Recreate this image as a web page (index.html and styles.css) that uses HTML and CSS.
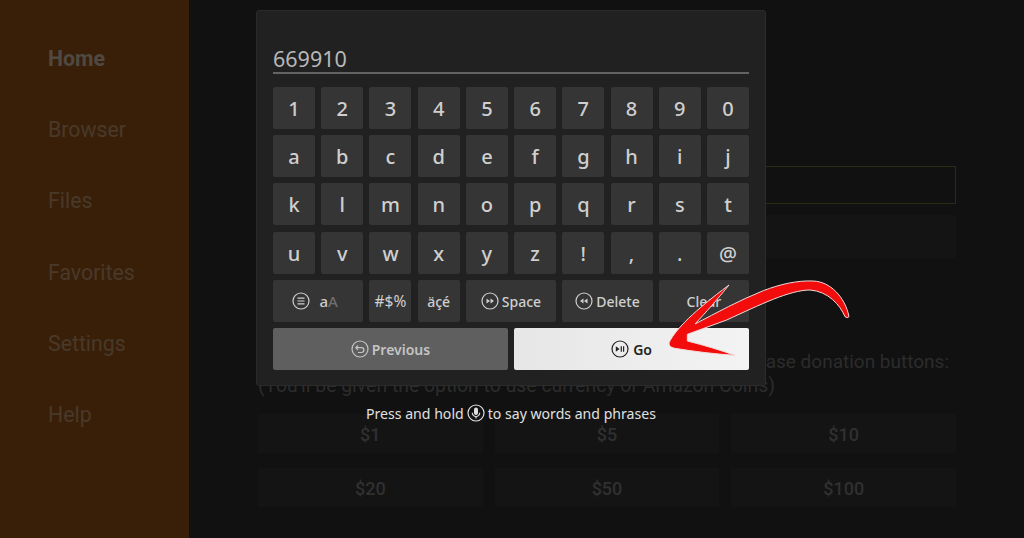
FILE: index.html
```html
<!DOCTYPE html>
<html lang="en">
<head>
    <meta charset="UTF-8">
    <meta name="viewport" content="width=device-width, initial-scale=1.0">
    <title>Downloader</title>
    <link rel="stylesheet" href="styles.css">
</head>
<body>
    <aside class="sidebar">
        <ul class="side-menu">
            <li class="active">Home</li>
            <li>Browser</li>
            <li>Files</li>
            <li>Favorites</li>
            <li>Settings</li>
            <li>Help</li>
        </ul>
    </aside>

    <main class="home">
        <div class="url-field"></div>
        <div class="url-button"></div>
        <div class="donate-note">
            <p class="note-top">purchase donation buttons:</p>
            <p>(You'll be given the option to use currency or Amazon Coins)</p>
        </div>
        <div class="donate-grid">
            <div class="donate-btn">$1</div>
            <div class="donate-btn">$5</div>
            <div class="donate-btn">$10</div>
            <div class="donate-btn">$20</div>
            <div class="donate-btn">$50</div>
            <div class="donate-btn">$100</div>
        </div>
    </main>

    <!-- Keyboard sits over the dimmed page -->
    <div class="keyboard-layer">
        <div class="keyboard">
            <div class="key-input">669910</div>
            <div class="key-grid">
                <div class="key">1</div><div class="key">2</div><div class="key">3</div><div class="key">4</div><div class="key">5</div>
                <div class="key">6</div><div class="key">7</div><div class="key">8</div><div class="key">9</div><div class="key">0</div>
                <div class="key">a</div><div class="key">b</div><div class="key">c</div><div class="key">d</div><div class="key">e</div>
                <div class="key">f</div><div class="key">g</div><div class="key">h</div><div class="key">i</div><div class="key">j</div>
                <div class="key">k</div><div class="key">l</div><div class="key">m</div><div class="key">n</div><div class="key">o</div>
                <div class="key">p</div><div class="key">q</div><div class="key">r</div><div class="key">s</div><div class="key">t</div>
                <div class="key">u</div><div class="key">v</div><div class="key">w</div><div class="key">x</div><div class="key">y</div>
                <div class="key">z</div><div class="key">!</div><div class="key">,</div><div class="key">.</div><div class="key">@</div>

                <div class="key small wide case-key">
                    <svg class="icon" viewBox="0 0 18 18"><circle cx="9" cy="9" r="8"/><path d="M5.500 6.200h7M5.500 9h7M5.500 11.800h7"/></svg>
                    <span><b>a</b><i>A</i></span>
                </div>
                <div class="key small symbols">#$%</div>
                <div class="key small">äçé</div>
                <div class="key small wide">
                    <svg class="icon" viewBox="0 0 18 18"><circle cx="9" cy="9" r="8"/><path class="solid" d="M5.500 6.500 9 9l-3.500 2.500zM9.500 6.500 13 9l-3.500 2.500z"/></svg>
                    Space
                </div>
                <div class="key small wide">
                    <svg class="icon" viewBox="0 0 18 18"><circle cx="9" cy="9" r="8"/><path class="solid" d="M8.500 6.500 5 9l3.500 2.500zM12.500 6.500 9 9l3.500 2.500z"/></svg>
                    Delete
                </div>
                <div class="key small wide">Clear</div>

                <div class="action previous">
                    <svg class="icon" viewBox="0 0 18 18"><circle cx="9" cy="9" r="8"/><path d="M7 5.500 4.800 7.700 7 9.900M5 7.700h5.500a2.400 2.400 0 0 1 0 4.800H7"/></svg>
                    Previous
                </div>
                <div class="action go">
                    <svg class="icon" viewBox="0 0 18 18"><circle cx="9" cy="9" r="8"/><path class="solid" d="M4.800 6.300 8.600 9l-3.800 2.700z"/><path d="M10.300 6.300v5.400M12.600 6.300v5.400"/></svg>
                    Go
                </div>
            </div>
        </div>
        <p class="voice-hint">
            Press and hold
            <svg class="icon mic" viewBox="0 0 18 18"><circle cx="9" cy="9" r="8"/><rect class="solid" x="7" y="3.500" width="4" height="7.500" rx="2"/><path d="M5.300 8.800a3.700 3.700 0 0 0 7.400 0M9 12.500v2"/></svg>
            to say words and phrases
        </p>
    </div>

    <!-- Red hand-drawn arrow pointing at Go -->
    <svg class="arrow" viewBox="0 0 630 300">
        <path d="M58 216C80 175 130 125 237 45C205 85 165 130 135 162C200 128 270 90 340 62C390 43 440 31 490 33C540 35 585 80 597 140Q592 146 585 140C570 105 535 64 480 60C420 60 330 104 230 150L112 193L112 213C160 225 210 240 255 256C195 252 135 245 75 235C60 232 55 225 58 216Z"/>
    </svg>
</body>
</html>
```

FILE: styles.css
```css
* {
    margin: 0;
    padding: 0;
    box-sizing: border-box;
}

html, body {
    height: 100%;
}

body {
    display: flex;
    position: relative;
    overflow: hidden;
    background: #111111;
    font-family: Roboto, Arial, sans-serif;
}

/* Side menu, dimmed */
.sidebar {
    width: 189px;
    flex-shrink: 0;
    background: #3a1f08;
    padding: 23px 0 0 48px;
}

.side-menu {
    list-style: none;
    color: #48392b;
    font-size: 21.300px;
}

.side-menu li {
    height: 71.200px;
    line-height: 71.200px;
}

.side-menu .active {
    font-weight: 700;
    color: #4f4942;
}

/* Page behind the keyboard */
.home {
    flex: 1;
    padding: 166px 68px 0 69px;
}

.url-field {
    height: 38px;
    border: 1px solid #2c2c12;
}

.url-button {
    height: 43px;
    margin-top: 11px;
    background: #141414;
}

.donate-note {
    margin-top: 92px;
    font-size: 19.400px;
    line-height: 24px;
    color: #2c2c2c;
    white-space: nowrap;
}

.note-top {
    padding-right: 7px;
    text-align: right;
    font-size: 19px;
}

.donate-grid {
    display: grid;
    grid-template-columns: repeat(3, 1fr);
    gap: 15px 12px;
    margin-top: 16px;
}

.donate-btn {
    height: 39px;
    line-height: 41px;
    text-align: center;
    background: #141414;
    color: #303030;
    font-size: 18px;
    font-weight: 500;
}

/* On-screen keyboard */
.keyboard-layer {
    position: absolute;
    top: 10px;
    left: 256px;
    width: 510px;
}

.keyboard {
    height: 376px;
    padding: 0 16px;
    background: #212121;
    border: 1px solid #2b2b2b;
    border-radius: 3px;
    font-family: "Noto Sans", Arial, sans-serif;
}

.key-input {
    height: 63px;
    padding-top: 34px;
    margin: 0 0 13px;
    border-bottom: 2px solid #636363;
    font-size: 21.500px;
    line-height: 27px;
    color: #b8b8b8;
}

.key-grid {
    display: grid;
    grid-template-columns: repeat(10, 1fr);
    grid-auto-rows: 42px;
    gap: 6.200px;
}

.key {
    display: flex;
    align-items: center;
    justify-content: center;
    gap: 3px;
    padding-top: 1px;
    background: #353535;
    border-radius: 2px;
    color: #cfcfcf;
    font-size: 20px;
    font-weight: 500;
}

.key.small {
    font-size: 14px;
}

.key.symbols {
    font-size: 15.500px;
    font-weight: 400;
}

.key.wide {
    grid-column: span 2;
}

.key.case-key {
    gap: 9px;
    padding-right: 6px;
    font-size: 15px;
}

.case-key b {
    font-weight: 500;
}

.case-key i {
    font-style: normal;
    color: #6f6f6f;
}

.action {
    grid-column: span 5;
    display: flex;
    align-items: center;
    justify-content: center;
    gap: 3px;
    padding-top: 1px;
    border-radius: 2px;
    font-size: 14px;
    font-weight: 600;
}

.previous {
    background: #5f5f5f;
    color: #c4c4c4;
}

.go {
    gap: 4px;
    background: linear-gradient(90deg, #e6e6e6, #f3f3f3);
    color: #222222;
}

.icon {
    width: 18px;
    height: 18px;
    flex-shrink: 0;
    fill: none;
    stroke: currentColor;
    stroke-width: 1.200;
}

.icon .solid {
    fill: currentColor;
    stroke: none;
}

.voice-hint {
    display: flex;
    align-items: center;
    justify-content: center;
    gap: 3px;
    margin-top: 17px;
    height: 20px;
    color: #e0e0e0;
    font-family: "Noto Sans", Arial, sans-serif;
    font-size: 14.100px;
}

.arrow {
    position: absolute;
    top: 270px;
    left: 650px;
    width: 210px;
    height: 100px;
}

.arrow path {
    fill: #f20c0c;
    stroke: #f3d9d9;
    stroke-width: 3;
    stroke-linejoin: round;
}
```
